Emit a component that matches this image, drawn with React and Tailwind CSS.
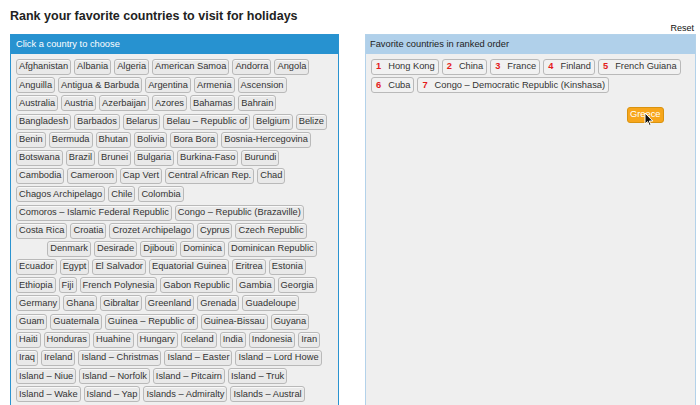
const rows = [
  ['Afghanistan', 'Albania', 'Algeria', 'American Samoa', 'Andorra', 'Angola'],
  ['Anguilla', 'Antigua & Barbuda', 'Argentina', 'Armenia', 'Ascension'],
  ['Australia', 'Austria', 'Azerbaijan', 'Azores', 'Bahamas', 'Bahrain'],
  ['Bangladesh', 'Barbados', 'Belarus', 'Belau – Republic of', 'Belgium', 'Belize'],
  ['Benin', 'Bermuda', 'Bhutan', 'Bolivia', 'Bora Bora', 'Bosnia-Hercegovina'],
  ['Botswana', 'Brazil', 'Brunei', 'Bulgaria', 'Burkina-Faso', 'Burundi'],
  ['Cambodia', 'Cameroon', 'Cap Vert', 'Central African Rep.', 'Chad'],
  ['Chagos Archipelago', 'Chile', 'Colombia'],
  ['Comoros – Islamic Federal Republic', 'Congo – Republic (Brazaville)'],
  ['Costa Rica', 'Croatia', 'Crozet Archipelago', 'Cyprus', 'Czech Republic'],
  ['*Cuba', 'Denmark', 'Desirade', 'Djibouti', 'Dominica', 'Dominican Republic'],
  ['Ecuador', 'Egypt', 'El Salvador', 'Equatorial Guinea', 'Eritrea', 'Estonia'],
  ['Ethiopia', 'Fiji', 'French Polynesia', 'Gabon Republic', 'Gambia', 'Georgia'],
  ['Germany', 'Ghana', 'Gibraltar', 'Greenland', 'Grenada', 'Guadeloupe'],
  ['Guam', 'Guatemala', 'Guinea – Republic of', 'Guinea-Bissau', 'Guyana'],
  ['Haiti', 'Honduras', 'Huahine', 'Hungary', 'Iceland', 'India', 'Indonesia', 'Iran'],
  ['Iraq', 'Ireland', 'Island – Christmas', 'Island – Easter', 'Island – Lord Howe'],
  ['Island – Niue', 'Island – Norfolk', 'Island – Pitcairn', 'Island – Truk'],
  ['Island – Wake', 'Island – Yap', 'Islands – Admiralty', 'Islands – Austral'],
  ['Islands – Canary', 'Islands – Cook Islands', 'Islands – Gambier'],
]

const ranked = [
  ['Hong Kong', 'China', 'France', 'Finland', 'French Guiana'],
  ['Cuba', 'Congo – Democratic Republic (Kinshasa)'],
]

const Chip = ({ name }) => {
  const hidden = name.startsWith('*')
  return (
    <span
      className={`h-4 flex items-center px-[2px] border border-[#b9b9b9] rounded-[3px] bg-[#e9e9e9] text-[#333] whitespace-nowrap shadow-[inset_0_1px_0_#f8f8f8] ${hidden ? 'invisible' : ''}`}
    >
      {hidden ? name.slice(1) : name}
    </span>
  )
}

const Cursor = () => (
  <svg width="10" height="15" viewBox="0 0 10 15" className="absolute left-[17px] top-[5px]">
    <path d="M1 1 L1 12 L3.6 9.6 L5.4 13.6 L7 12.9 L5.3 9 L8.8 9 Z" fill="#111" stroke="#fff" strokeWidth="1" strokeLinejoin="round" />
  </svg>
)

export default function App() {
  let n = 0
  return (
    <div className="w-[700px] h-[405px] overflow-hidden bg-white font-['Liberation_Sans',Arial,sans-serif] text-[#222]">
      <h1 className="pl-[10px] pt-[8px] text-[12.5px] font-bold leading-[17px] text-[#222]">
        Rank your favorite countries to visit for holidays
      </h1>
      <div className="flex justify-end pr-[6px] text-[9px] leading-[11px] text-[#111] -mt-[2px]">
        <span>Reset</span>
      </div>
      <div className="flex gap-[26px] pl-[10px] pr-[4px]">
        <div className="w-[330px] h-[400px] border border-[#2a93d0] bg-[#efefef]">
          <div className="h-[19px] bg-[#2792d0] text-white text-[9.3px] flex items-center pl-[5px]">
            Click a country to choose
          </div>
          <div className="flex flex-col gap-[2.2px] px-[5px] pt-[5px] text-[9.3px] leading-none">
            {rows.map((row, i) => (
              <div key={i} className="flex gap-[3px]">
                {row.map(c => <Chip key={c} name={c} />)}
              </div>
            ))}
          </div>
        </div>
        <div className="relative w-[332px] h-[400px] border border-[#b3d2ea] bg-[#efefef]">
          <div className="h-[19px] bg-[#b0d0ea] text-[#222] text-[9.3px] flex items-center pl-[4px]">
            Favorite countries in ranked order
          </div>
          <div className="flex flex-col gap-[2.2px] px-[5px] pt-[5px] text-[9.3px] leading-none">
            {ranked.map((row, i) => (
              <div key={i} className="flex gap-[3px]">
                {row.map(c => {
                  n += 1
                  return (
                    <span key={c} className="h-4 flex items-center gap-[7px] pl-[4px] pr-[3px] border border-[#b9b9b9] rounded-[3px] bg-[#f1f1f1] text-[#333] whitespace-nowrap">
                      <span className="text-[#e41b1b] font-bold">{n}</span>
                      <span>{c}</span>
                    </span>
                  )
                })}
              </div>
            ))}
          </div>
          <div className="absolute left-[261px] top-[72px]">
            <span className="h-4 flex items-center px-[2px] border border-[#d9930f] rounded-[3px] bg-[#f7a61c] text-white text-[9.3px] leading-none whitespace-nowrap">
              Greece
            </span>
            <Cursor />
          </div>
        </div>
      </div>
    </div>
  )
}
